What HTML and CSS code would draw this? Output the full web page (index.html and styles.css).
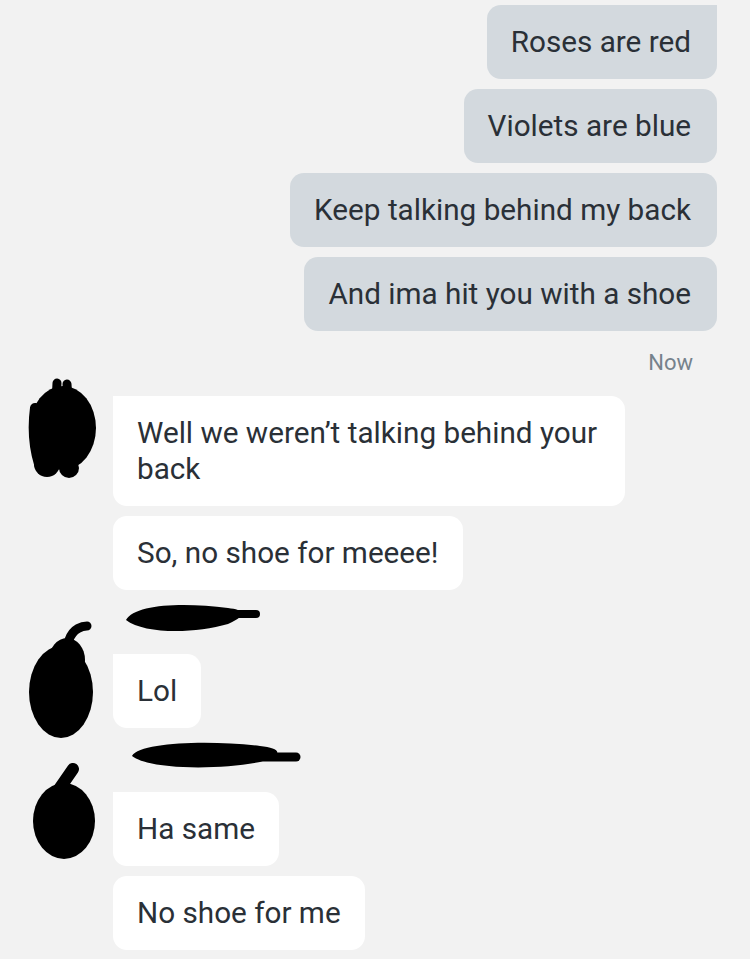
FILE: index.html
```html
<!DOCTYPE html>
<html lang="en">
<head>
  <meta charset="UTF-8">
  <meta name="viewport" content="width=device-width, initial-scale=1.0">
  <link rel="stylesheet" href="styles.css">
  <title>Chat</title>
</head>
<body>
  <div id="chat">
    <div class="sent">
      <div class="bubble first">Roses are red</div>
      <div class="bubble">Violets are blue</div>
      <div class="bubble">Keep talking behind my back</div>
      <div class="bubble">And ima hit you with a shoe</div>
    </div>
    <div class="time">Now</div>

    <div class="group top">
      <svg class="avatar av1" width="70" height="102" viewBox="0 0 70 102">
        <ellipse cx="36" cy="50" rx="33" ry="42" fill="#000"/>
        <path d="M30 5 L28 44 M40 6 L42 40" stroke="#000" stroke-width="9" stroke-linecap="round"/>
        <circle cx="20" cy="86" r="13" fill="#000"/>
        <circle cx="42" cy="90" r="10" fill="#000"/>
        <path d="M8 30 Q4 60 12 86" stroke="#000" stroke-width="10" stroke-linecap="round" fill="none"/>
      </svg>
      <div class="bubbles">
        <div class="bubble first">Well we weren’t talking behind your back</div>
        <div class="bubble">So, no shoe for meeee!</div>
      </div>
    </div>

    <div class="group">
      <svg class="name n1" width="136" height="35" viewBox="0 0 136 35">
        <path d="M2 20 C10 4 60 2 104 8 C120 10 126 14 104 24 C70 34 20 34 2 20 Z" fill="#000"/>
        <path d="M96 14 L132 14" stroke="#000" stroke-width="8" stroke-linecap="round"/>
      </svg>
      <svg class="avatar av2" width="70" height="120" viewBox="0 0 70 120">
        <ellipse cx="34" cy="72" rx="32" ry="46" fill="#000"/>
        <ellipse cx="40" cy="40" rx="18" ry="22" fill="#000"/>
        <path d="M42 20 C46 8 56 6 60 6" stroke="#000" stroke-width="9" stroke-linecap="round" fill="none"/>
      </svg>
      <div class="bubbles">
        <div class="bubble first">Lol</div>
      </div>
    </div>

    <div class="group">
      <svg class="name n2" width="172" height="32" viewBox="0 0 172 32">
        <path d="M2 18 C10 4 80 2 130 8 C150 10 156 16 130 24 C90 32 20 32 2 18 Z" fill="#000"/>
        <path d="M130 19 L166 19" stroke="#000" stroke-width="9" stroke-linecap="round"/>
      </svg>
      <svg class="avatar av3" width="66" height="100" viewBox="0 0 66 100">
        <ellipse cx="33" cy="60" rx="31" ry="38" fill="#000"/>
        <path d="M24 34 L42 8" stroke="#000" stroke-width="12" stroke-linecap="round"/>
      </svg>
      <div class="bubbles">
        <div class="bubble first">Ha same</div>
        <div class="bubble">No shoe for me</div>
      </div>
    </div>
  </div>
</body>
</html>
```

FILE: styles.css
```css
body {
  margin: 0;
  background-color: #f2f2f2;
  font-family: Roboto, "Liberation Sans", sans-serif;
  color: #2a3037;
}

#chat {
  padding-top: 5px;
}

.bubble {
  padding: 19px 24px;
  font-size: 29.7px;
  line-height: 36px;
  border-radius: 14px;
}

.sent {
  display: flex;
  flex-direction: column;
  align-items: flex-end;
  gap: 10px;
  padding-right: 33px;
}

.sent .bubble {
  background-color: #d3d9de;
  padding-right: 26px;
}

.sent .bubble.first {
  border-top-right-radius: 0;
}

.time {
  text-align: right;
  padding-right: 57px;
  margin-top: 19px;
  font-size: 22px;
  line-height: 26px;
  color: #76828c;
}

.group {
  display: grid;
  grid-template-columns: 113px 1fr;
  align-content: start;
  margin-top: 10px;
}

.group.top {
  margin-top: 2px;
}

.avatar {
  grid-column: 1;
  grid-row: 1 / span 2;
  margin-left: 27px;
  margin-bottom: -60px;
}

.name {
  grid-column: 2;
  grid-row: 1;
  margin-bottom: 19px;
}

.n1 {
  margin-left: 11px;
}

.n2 {
  margin-left: 17px;
  margin-bottom: 22px;
}

.av2 {
  margin-top: 20px;
}

.av3 {
  margin-top: 23px;
  margin-left: 31px;
}

.bubbles {
  grid-column: 2;
  grid-row: 2;
  display: flex;
  flex-direction: column;
  align-items: flex-start;
  gap: 10px;
}

.av1 + .bubbles {
  grid-row: 1 / span 2;
  margin-top: 18px;
}

.bubbles .bubble {
  background-color: #fff;
  max-width: 464px;
}

.bubbles .bubble.first {
  border-top-left-radius: 0;
}
```
